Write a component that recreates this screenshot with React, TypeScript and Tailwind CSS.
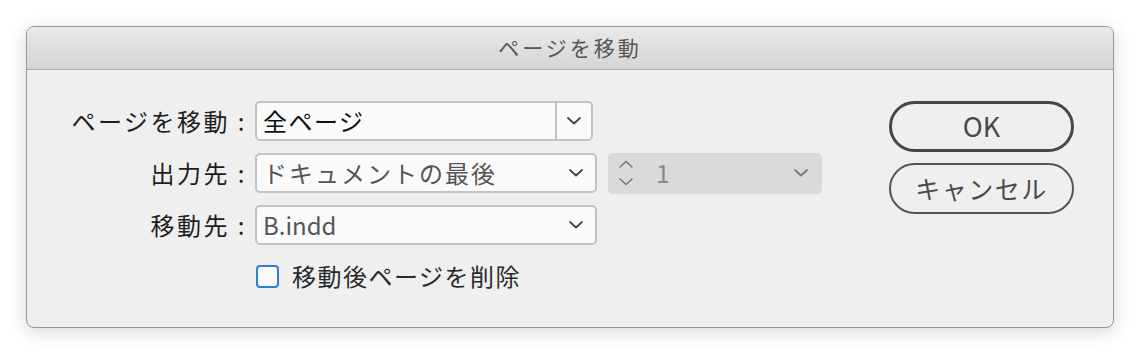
import React from "react";

const font = { fontFamily: '"Noto Sans CJK JP", "Noto Sans", sans-serif' };

const ChevronDown: React.FC<{ color?: string }> = ({ color = "#444" }) => (
	<svg width="14" height="8" viewBox="0 0 14 8" fill="none">
		<path d="M1 1l6 5.5L13 1" stroke={color} strokeWidth="1.8" strokeLinecap="round" strokeLinejoin="round" />
	</svg>
);

const Stepper: React.FC = () => (
	<svg width="16" height="30" viewBox="0 0 16 30" fill="none">
		<path d="M2 9l6-5.5L14 9" stroke="#777" strokeWidth="1.6" strokeLinecap="round" strokeLinejoin="round" />
		<path d="M2 21l6 5.5L14 21" stroke="#777" strokeWidth="1.6" strokeLinecap="round" strokeLinejoin="round" />
	</svg>
);

const Label: React.FC<{ text: string }> = ({ text }) => (
	<div className="w-[228px] text-right text-[24px] text-[#1e1e1e] tracking-[2.5px] leading-[40px] pr-[8px]">
		{text} :
	</div>
);

const App: React.FC = () => {
	return (
		<div className="w-[1141px] h-[355px] bg-white pt-[26px] pl-[26px]" style={font}>
			<div className="w-[1088px] h-[302px] rounded-[8px] border border-[#969696] bg-[#efefef] shadow-[0_4px_18px_rgba(0,0,0,0.16)] overflow-hidden flex flex-col">
				<div className="h-[43px] shrink-0 bg-gradient-to-b from-[#e9e9e9] to-[#d5d5d5] border-b border-[#a8a8a8] flex items-center justify-center text-[21px] tracking-[3px] text-[#555]">
					ページを移動
				</div>
				<div className="flex justify-between pt-[31px]">
					<div className="flex flex-col">
						<div className="flex flex-col gap-[12px]">
							<div className="flex items-center h-[40px]">
								<Label text="ページを移動" />
								<div className="w-[338px] h-[40px] rounded-[5px] border-2 border-[#c3c3c3] bg-[#fafafa] flex">
									<div className="flex-1 flex items-center pl-[6px] text-[24px] tracking-[1.5px] text-[#111]">全ページ</div>
									<div className="w-[36px] border-l-2 border-[#c3c3c3] flex items-center justify-center">
										<ChevronDown />
									</div>
								</div>
							</div>
							<div className="flex items-center h-[40px]">
								<Label text="出力先" />
								<div className="w-[342px] h-[40px] rounded-[5px] border-2 border-[#c3c3c3] bg-[#fafafa] flex items-center justify-between pl-[6px] pr-[12px]">
									<span className="text-[24px] tracking-[2px] text-[#555]">ドキュメントの最後</span>
									<ChevronDown />
								</div>
								<div className="ml-[11px] w-[214px] h-[41px] rounded-[5px] bg-[#dadada] flex items-center pl-[10px] pr-[14px]">
									<Stepper />
									<span className="ml-[22px] text-[25px] text-[#8a8a8a] flex-1">1</span>
									<ChevronDown color="#7a7a7a" />
								</div>
							</div>
							<div className="flex items-center h-[40px]">
								<Label text="移動先" />
								<div className="w-[342px] h-[40px] rounded-[5px] border-2 border-[#c3c3c3] bg-[#fafafa] flex items-center justify-between pl-[6px] pr-[12px]">
									<span className="text-[24px] text-[#555]">B.indd</span>
									<ChevronDown />
								</div>
							</div>
						</div>
						<label className="flex items-center mt-[13px] ml-[229px]">
							<span className="w-[23px] h-[23px] rounded-[4px] border-2 border-[#2f7de1] bg-[#fafafa]" />
							<span className="ml-[13px] text-[24px] tracking-[1.5px] text-[#2a2a2a]">移動後ページを削除</span>
						</label>
					</div>
					<div className="flex flex-col gap-[11px] pr-[39px]">
						<button className="w-[185px] h-[51px] rounded-full border-[3px] border-[#474747] text-[27px] text-[#4a4a4a] flex items-center justify-center">
							OK
						</button>
						<button className="w-[185px] h-[51px] rounded-full border-2 border-[#555] text-[25px] tracking-[1.5px] text-[#4a4a4a] flex items-center justify-center">
							キャンセル
						</button>
					</div>
				</div>
			</div>
		</div>
	);
};

export default App;
